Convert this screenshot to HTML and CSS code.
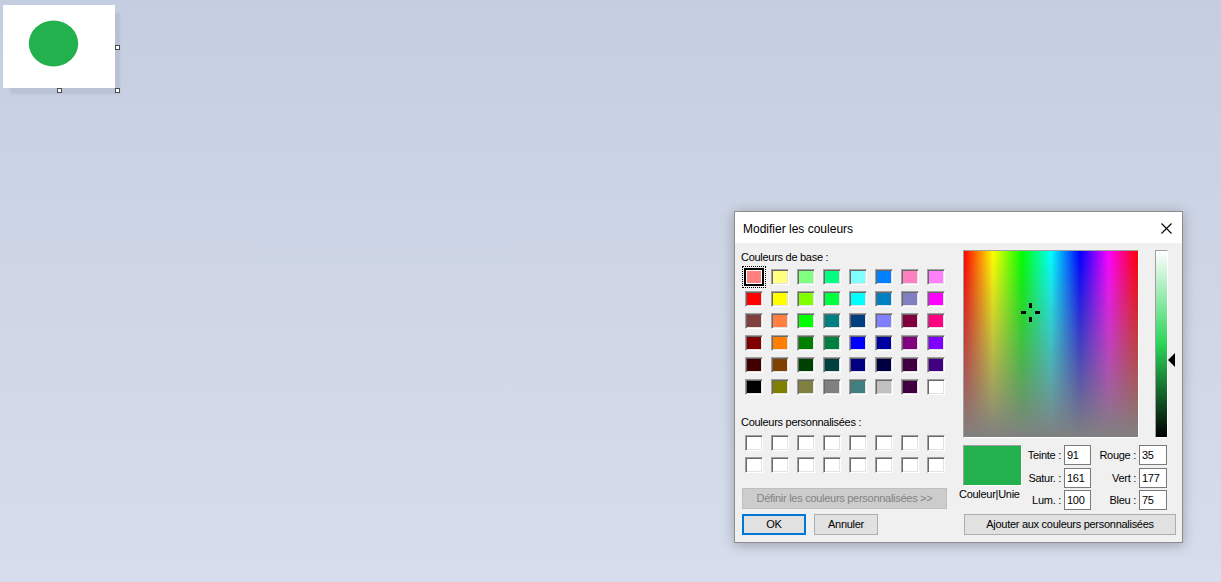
FILE: index.html
```html
<!DOCTYPE html>
<html lang="fr">
<head>
<meta charset="utf-8">
<title>Modifier les couleurs</title>
<link rel="stylesheet" href="styles.css">
</head>
<body>
<div class="desk">
  <div class="shape">
    <svg class="shape-svg" width="112" height="83" viewBox="0 0 112 83">
      <ellipse cx="50.5" cy="38.5" rx="24.7" ry="23" fill="#22b14c"/>
    </svg>
    <div class="handle h-right"></div>
    <div class="handle h-bottom"></div>
    <div class="handle h-corner"></div>
  </div>

  <div class="dialog">
    <div class="titlebar">
      <span class="title">Modifier les couleurs</span>
      <svg class="close" width="11" height="11" viewBox="0 0 11 11">
        <path d="M0.5 0.5L10.5 10.5M10.5 0.5L0.5 10.5" stroke="#000" stroke-width="1.1" fill="none"/>
      </svg>
    </div>
    <div class="body">
      <div class="left">
        <div class="lbl">Couleurs de base :</div>
        <div class="grid basic">
          <div class="sw selected" style="background:#ff8080"></div>
          <div class="sw" style="background:#ffff80"></div>
          <div class="sw" style="background:#80ff80"></div>
          <div class="sw" style="background:#00ff80"></div>
          <div class="sw" style="background:#80ffff"></div>
          <div class="sw" style="background:#0080ff"></div>
          <div class="sw" style="background:#ff80c0"></div>
          <div class="sw" style="background:#ff80ff"></div>

          <div class="sw" style="background:#ff0000"></div>
          <div class="sw" style="background:#ffff00"></div>
          <div class="sw" style="background:#80ff00"></div>
          <div class="sw" style="background:#00ff40"></div>
          <div class="sw" style="background:#00ffff"></div>
          <div class="sw" style="background:#0080c0"></div>
          <div class="sw" style="background:#8080c0"></div>
          <div class="sw" style="background:#ff00ff"></div>

          <div class="sw" style="background:#804040"></div>
          <div class="sw" style="background:#ff8040"></div>
          <div class="sw" style="background:#00ff00"></div>
          <div class="sw" style="background:#008080"></div>
          <div class="sw" style="background:#004080"></div>
          <div class="sw" style="background:#8080ff"></div>
          <div class="sw" style="background:#800040"></div>
          <div class="sw" style="background:#ff0080"></div>

          <div class="sw" style="background:#800000"></div>
          <div class="sw" style="background:#ff8000"></div>
          <div class="sw" style="background:#008000"></div>
          <div class="sw" style="background:#008040"></div>
          <div class="sw" style="background:#0000ff"></div>
          <div class="sw" style="background:#0000a0"></div>
          <div class="sw" style="background:#800080"></div>
          <div class="sw" style="background:#8000ff"></div>

          <div class="sw" style="background:#400000"></div>
          <div class="sw" style="background:#804000"></div>
          <div class="sw" style="background:#004000"></div>
          <div class="sw" style="background:#004040"></div>
          <div class="sw" style="background:#000080"></div>
          <div class="sw" style="background:#000040"></div>
          <div class="sw" style="background:#400040"></div>
          <div class="sw" style="background:#400080"></div>

          <div class="sw" style="background:#000000"></div>
          <div class="sw" style="background:#808000"></div>
          <div class="sw" style="background:#808040"></div>
          <div class="sw" style="background:#808080"></div>
          <div class="sw" style="background:#408080"></div>
          <div class="sw" style="background:#c0c0c0"></div>
          <div class="sw" style="background:#400040"></div>
          <div class="sw" style="background:#ffffff"></div>
        </div>

        <div class="lbl lbl2">Couleurs personnalisées :</div>
        <div class="grid custom">
          <div class="sw"></div><div class="sw"></div><div class="sw"></div><div class="sw"></div>
          <div class="sw"></div><div class="sw"></div><div class="sw"></div><div class="sw"></div>
          <div class="sw"></div><div class="sw"></div><div class="sw"></div><div class="sw"></div>
          <div class="sw"></div><div class="sw"></div><div class="sw"></div><div class="sw"></div>
        </div>

        <button class="btn btn-disabled define">Définir les couleurs personnalisées &gt;&gt;</button>
        <div class="btnrow">
          <button class="btn btn-default">OK</button>
          <button class="btn">Annuler</button>
        </div>
      </div>

      <div class="right">
        <div class="pickers">
          <div class="spectrum">
            <svg class="cross" width="21" height="21" viewBox="0 0 21 21">
              <rect x="9" y="1" width="3" height="5" fill="#000"/>
              <rect x="9" y="15" width="3" height="5" fill="#000"/>
              <rect x="1" y="9" width="5" height="3" fill="#000"/>
              <rect x="15" y="9" width="5" height="3" fill="#000"/>
            </svg>
          </div>
          <div class="lumwrap">
            <div class="lum"></div>
            <div class="arrow"></div>
          </div>
        </div>

        <div class="values">
          <div class="preview"></div>
          <span class="vlbl">Teinte :</span><div class="field">91</div>
          <span class="vlbl">Rouge :</span><div class="field">35</div>
          <span class="vlbl">Satur. :</span><div class="field">161</div>
          <span class="vlbl">Vert :</span><div class="field">177</div>
          <div class="plabel">Couleur|Unie</div>
          <span class="vlbl">Lum. :</span><div class="field">100</div>
          <span class="vlbl">Bleu :</span><div class="field">75</div>
        </div>

        <button class="btn add">Ajouter aux couleurs personnalisées</button>
      </div>
    </div>
  </div>
</div>
</body>
</html>
```

FILE: styles.css
```css
html, body {
  margin: 0;
  padding: 0;
}

body {
  width: 1221px;
  height: 582px;
  overflow: hidden;
  background: linear-gradient(to bottom, #c5cee0 0%, #cfd7e7 55%, #d6deed 100%);
  font-family: "Liberation Sans", Arial, sans-serif;
}

.desk {
  position: relative;
  width: 1221px;
  height: 582px;
}

/* canvas shape (top-left) */
.shape {
  position: absolute;
  left: 3px;
  top: 5px;
  width: 112px;
  height: 83px;
  background: #ffffff;
  box-shadow: 6px 7px 2px -1px rgba(70, 85, 110, 0.11);
}

.shape-svg {
  display: block;
}

.handle {
  position: absolute;
  width: 5px;
  height: 5px;
  box-sizing: border-box;
  background: #ffffff;
  border: 1px solid #4a4a4a;
}

.h-right { left: 112px; top: 40px; }
.h-bottom { left: 54px; top: 83px; }
.h-corner { left: 112px; top: 83px; }

/* dialog window */
.dialog {
  position: absolute;
  left: 734px;
  top: 211px;
  width: 449px;
  height: 332px;
  box-sizing: border-box;
  border: 1px solid #8d8d8d;
  background: #f0f0f0;
  box-shadow: 0 2px 12px rgba(0, 0, 0, 0.28);
  display: flex;
  flex-direction: column;
  font-size: 11px;
  letter-spacing: -0.28px;
  color: #000;
}

.titlebar {
  height: 31px;
  flex: none;
  background: #ffffff;
  display: flex;
  align-items: center;
  justify-content: space-between;
  padding-left: 8px;
  padding-right: 10px;
}

.title {
  font-size: 12px;
  letter-spacing: 0;
  color: #000;
  position: relative;
  top: 1px;
}

.close {
  display: block;
  position: relative;
  top: 1px;
}

.body {
  flex: 1;
  display: flex;
  padding-left: 7px;
  gap: 15px;
}

/* left column */
.left {
  width: 206px;
  display: flex;
  flex-direction: column;
  align-items: flex-start;
}

.lbl {
  margin-top: 8px;
  margin-left: -1px;
  line-height: 13px;
  height: 13px;
  white-space: nowrap;
}

.lbl2 {
  margin-top: 21px;
}

.grid {
  display: grid;
  grid-template-columns: repeat(8, 18px);
  grid-auto-rows: 16px;
  column-gap: 8px;
  row-gap: 6px;
  margin-left: 3px;
}

.basic {
  margin-top: 5px;
}

.custom {
  margin-top: 6px;
}

.sw {
  box-sizing: border-box;
  width: 18px;
  height: 16px;
  background: #ffffff;
  border: 1px solid;
  border-color: #a0a0a0 #ffffff #ffffff #a0a0a0;
  box-shadow: inset 1px 1px 0 #696969, inset -1px -1px 0 #e3e3e3;
}

.sw.selected {
  border-color: #000;
  box-shadow: 0 0 0 1px #000, inset 0 0 0 1px #ffffff;
  outline: 1px dotted #000;
  outline-offset: 2px;
}

.btn {
  box-sizing: border-box;
  height: 21px;
  margin: 0;
  padding: 0;
  border: 1px solid #adadad;
  background: #e1e1e1;
  font-family: "Liberation Sans", Arial, sans-serif;
  font-size: 11px;
  letter-spacing: -0.28px;
  color: #000;
  line-height: 19px;
  text-align: center;
}

.btn-disabled {
  background: #cccccc;
  border-color: #bfbfbf;
  color: #838383;
}

.define {
  width: 205px;
  margin-top: 15px;
}

.btnrow {
  display: flex;
  gap: 8px;
  margin-top: 5px;
}

.btnrow .btn {
  width: 64px;
}

.btn-default {
  border: 2px solid #0078d7;
  line-height: 17px;
}

/* right column */
.right {
  width: 213px;
  display: flex;
  flex-direction: column;
  align-items: flex-start;
}

.pickers {
  display: flex;
  gap: 16px;
  margin-top: 7px;
}

.spectrum {
  position: relative;
  box-sizing: border-box;
  width: 176px;
  height: 188px;
  border: 1px solid;
  border-color: #a0a0a0 #ffffff #ffffff #a0a0a0;
  background:
    linear-gradient(to bottom, rgba(128, 128, 128, 0) 0%, #808080 100%),
    linear-gradient(to right, #ff0000 0%, #ffff00 16.67%, #00ff00 33.33%, #00ffff 50%, #0000ff 66.67%, #ff00ff 83.33%, #ff0000 100%);
}

.cross {
  position: absolute;
  left: 56px;
  top: 51px;
  display: block;
}

.lumwrap {
  position: relative;
  width: 13px;
  height: 188px;
}

.lum {
  box-sizing: border-box;
  width: 13px;
  height: 188px;
  border: 1px solid;
  border-color: #a0a0a0 #ffffff #ffffff #a0a0a0;
  background: linear-gradient(to bottom, #ffffff 0%, #2ad559 50%, #000000 100%);
}

.arrow {
  position: absolute;
  left: 13px;
  top: 103px;
  width: 0;
  height: 0;
  border-top: 7px solid transparent;
  border-bottom: 7px solid transparent;
  border-right: 7px solid #000;
}

.values {
  display: grid;
  grid-template-columns: 59px 42px 27px 48px 28px;
  grid-template-rows: 23px 22px 20px;
  margin-top: 7px;
}

.preview {
  grid-column: 1;
  grid-row: 1 / span 2;
  width: 59px;
  height: 41px;
  box-sizing: border-box;
  background: #22b14c;
  border: 1px solid;
  border-color: #a0a0a0 #ffffff #ffffff #a0a0a0;
}

.plabel {
  grid-column: 1;
  grid-row: 3;
  margin-left: -4px;
  margin-top: -2px;
  line-height: 13px;
  white-space: nowrap;
}

.vlbl {
  box-sizing: border-box;
  height: 20px;
  line-height: 20px;
  text-align: right;
  padding-right: 3px;
  white-space: nowrap;
}

.field {
  box-sizing: border-box;
  height: 20px;
  background: #ffffff;
  border: 1px solid #7a7a7a;
  padding-left: 2px;
  line-height: 18px;
  font-size: 11px;
}

.add {
  width: 212px;
  margin-top: 4px;
  margin-left: 1px;
}
```
